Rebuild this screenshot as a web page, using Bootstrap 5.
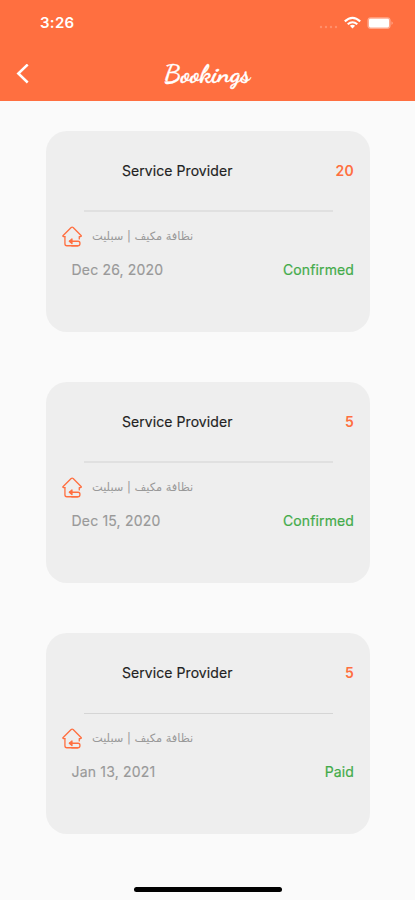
<!DOCTYPE html>
<html lang="en">
<head>
<meta charset="utf-8">
<meta name="viewport" content="width=device-width, initial-scale=1">
<title>Bookings</title>
<link href="https://cdn.jsdelivr.net/npm/bootstrap@5.3.0/dist/css/bootstrap.min.css" rel="stylesheet">
<style>
body{background:#fafafa;font-family:Inter,"Liberation Sans",sans-serif;height:900px;overflow:hidden}
.app-head{background:#ff6f40;height:101px}
.status-bar{height:46px;padding:0 20px 0 40px}
.clock{font-size:15px;font-weight:600;letter-spacing:.3px;line-height:20px}
.title-bar{height:55px;padding:0 17px 0 16px}
.side-slot{width:50px}
.script-title{font-family:"Dancing Script",cursive;font-size:26px;font-weight:700;line-height:34px;-webkit-text-stroke:.35px #fff}
.bookings{padding:30px 45.5px 0 46px;gap:50px}
.booking{height:201px;background:#eee;border-radius:21px;padding:20px 15.5px 0 16px}
.provider-row{height:39px;padding-left:60px}
.provider{font-size:14px;font-weight:400;color:#222;letter-spacing:.07px;-webkit-text-stroke:.15px #222}
.count{font-size:14px;font-weight:600;color:#ff6f40;letter-spacing:.3px}
.rule{height:2px;background:#e0e0e0;margin:20px 21.5px 0 22px}
.booking:last-child .rule{height:1px;background:#d5d5d5;margin-top:21px}
.service-row{height:21px;margin-top:14px}
.service{font-family:"DejaVu Sans",sans-serif;font-size:11.4px;line-height:20px;color:#999;margin:-2px 0 0 9.5px}
.date-row{height:20px;margin-top:12px;padding-left:9.5px;font-size:14px;letter-spacing:.18px}
.date{color:#999;-webkit-text-stroke:.15px #999}
.state{color:#43ab4a;letter-spacing:.12px;-webkit-text-stroke:.2px #43ab4a}
.home-bar{width:148px;height:5px;margin-bottom:8px}
</style>
</head>
<body class="d-flex flex-column">
<svg class="d-none">
  <symbol id="house" viewBox="0 0 21 21"><g fill="none" stroke="#ff6f40" stroke-width="1.35" stroke-linecap="round" stroke-linejoin="round"><path d="M3 10.6H1.4Q.4 10.4 1.2 9.4L9.4 1.3Q10.4.5 11.4 1.3L19.5 9.4Q20.2 10.4 19.2 10.6H17.7V13"/><path d="M3 10.6V18Q3 20 5 20H16"/><path d="M10.2 13L7.5 15.4L10.2 17.8Z" fill="#ff6f40"/><path d="M7.8 15.4H16.4Q18.4 15.4 18.4 17.6Q18.4 20 16.4 20H10"/></g></symbol>
</svg>
<header class="app-head text-white flex-shrink-0">
  <div class="status-bar d-flex align-items-center">
    <span class="clock me-auto">3:26</span>
    <svg width="76" height="20" viewBox="0 0 76 20">
      <g fill="#fff" opacity=".22"><circle cx="2" cy="14" r="1.2"/><circle cx="7" cy="14" r="1.2"/><circle cx="12" cy="14" r="1.2"/><circle cx="17" cy="14" r="1.2"/></g>
      <g fill="none" stroke="#fff" stroke-width="2.1"><path d="M25.8 8.4Q33.5 1.4 41.2 8.4"/><path d="M28.7 11.3Q33.5 7.2 38.3 11.3"/></g>
      <path d="M30.9 12.8Q33.5 10.8 36.1 12.8L33.5 15.6Z" fill="#fff"/>
      <rect x="48.4" y="4.2" width="23.2" height="11.8" rx="3.4" fill="#fff" opacity=".4"/>
      <rect x="50" y="5.8" width="20" height="8.6" rx="1.4" fill="#fff"/>
      <path d="M72.6 8.2Q74.6 10 72.6 12Z" fill="#fff" opacity=".5"/>
    </svg>
  </div>
  <div class="title-bar d-flex align-items-center justify-content-between">
    <div class="side-slot d-flex"><svg width="14" height="20" viewBox="0 0 14 20"><path d="M11.7 .5L2.3 9.5L11.7 18.5" fill="none" stroke="#fff" stroke-width="2.5"/></svg></div>
    <h1 class="script-title mb-0">Bookings</h1>
    <div class="side-slot"></div>
  </div>
</header>
<main class="bookings d-flex flex-column">
  <article class="booking">
    <div class="provider-row d-flex align-items-center justify-content-between"><span class="provider">Service Provider</span><span class="count">20</span></div>
    <div class="rule"></div>
    <div class="service-row d-flex align-items-center"><svg width="20.5" height="21"><use href="#house"/></svg><span class="service" dir="rtl" lang="ar">نظافة مكيف | سبليت</span></div>
    <div class="date-row d-flex align-items-center justify-content-between"><span class="date">Dec 26, 2020</span><span class="state">Confirmed</span></div>
  </article>
  <article class="booking">
    <div class="provider-row d-flex align-items-center justify-content-between"><span class="provider">Service Provider</span><span class="count">5</span></div>
    <div class="rule"></div>
    <div class="service-row d-flex align-items-center"><svg width="20.5" height="21"><use href="#house"/></svg><span class="service" dir="rtl" lang="ar">نظافة مكيف | سبليت</span></div>
    <div class="date-row d-flex align-items-center justify-content-between"><span class="date">Dec 15, 2020</span><span class="state">Confirmed</span></div>
  </article>
  <article class="booking">
    <div class="provider-row d-flex align-items-center justify-content-between"><span class="provider">Service Provider</span><span class="count">5</span></div>
    <div class="rule"></div>
    <div class="service-row d-flex align-items-center"><svg width="20.5" height="21"><use href="#house"/></svg><span class="service" dir="rtl" lang="ar">نظافة مكيف | سبليت</span></div>
    <div class="date-row d-flex align-items-center justify-content-between"><span class="date">Jan 13, 2021</span><span class="state">Paid</span></div>
  </article>
</main>
<div class="home-bar bg-black rounded-pill mx-auto mt-auto"></div>
<script src="https://cdn.jsdelivr.net/npm/bootstrap@5.3.0/dist/js/bootstrap.bundle.min.js"></script>
</body>
</html>
